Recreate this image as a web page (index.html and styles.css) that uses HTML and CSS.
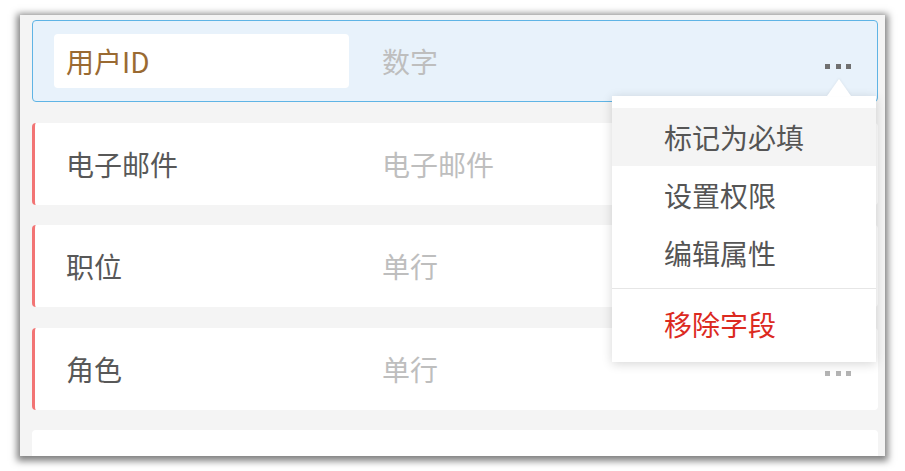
FILE: index.html
```html
<!DOCTYPE html>
<html lang="zh">
<head>
<meta charset="utf-8">
<title>字段列表</title>
<link rel="stylesheet" href="styles.css">
</head>
<body>
<div class="frame">
  <div class="list">
    <div class="field selected">
      <div class="name-input">用户ID</div>
      <div class="type">数字</div>
      <div class="more dark"><i></i><i></i><i></i></div>
    </div>
    <div class="field required">
      <div class="name">电子邮件</div>
      <div class="type">电子邮件</div>
      <div class="more"><i></i><i></i><i></i></div>
    </div>
    <div class="field required">
      <div class="name">职位</div>
      <div class="type">单行</div>
      <div class="more"><i></i><i></i><i></i></div>
    </div>
    <div class="field required">
      <div class="name">角色</div>
      <div class="type">单行</div>
      <div class="more"><i></i><i></i><i></i></div>
    </div>
    <div class="field"></div>
  </div>
  <div class="menu">
    <span class="caret"></span>
    <div class="item hover">标记为必填</div>
    <div class="item">设置权限</div>
    <div class="item">编辑属性</div>
    <div class="divider"></div>
    <div class="item danger">移除字段</div>
  </div>
</div>
</body>
</html>
```
FILE: styles.css
```css
html, body {
  margin: 0;
  background: #fff;
  overflow: hidden;
}
body {
  height: 471px;
  padding-top: 15px;
  box-sizing: border-box;
  font-family: "Noto Sans CJK SC", "Noto Sans", sans-serif;
  font-size: 28px;
}
.frame {
  position: relative;
  margin-left: 20px;
  width: 865px;
  height: 441px;
  overflow: hidden;
  background: #f4f4f4;
  box-shadow: 0 2px 7px 3px rgba(0, 0, 0, 0.5);
}
.list {
  display: flex;
  flex-direction: column;
  gap: 20.5px;
  padding: 5px 7px 0 12px;
}
.field {
  flex-shrink: 0;
  box-sizing: border-box;
  height: 82px;
  display: flex;
  align-items: center;
  background: #fff;
  border-radius: 4px;
  padding: 0 27px 0 22px;
}
.field.selected {
  border: 1px solid #5fb4e5;
  background: #e8f2fb;
  padding-left: 21px;
  padding-right: 26px;
}
.field.required {
  border-left: 3px solid #f27474;
  padding-left: 19px;
}
.name, .name-input {
  box-sizing: border-box;
  width: 295px;
  padding-left: 12px;
  color: #585858;
}
.name-input {
  height: 54px;
  display: flex;
  align-items: center;
  background: #fff;
  border-radius: 4px;
  color: #9a6a32;
}
.type {
  flex: 1;
  margin-left: 33px;
  color: #bebebe;
}
.more {
  display: flex;
  gap: 5.5px;
  margin-top: 10px;
}
.more i {
  display: block;
  width: 5px;
  height: 5px;
  background: #b4b4b4;
}
.more.dark i {
  background: #707070;
}
.menu {
  position: absolute;
  left: 592px;
  top: 81px;
  width: 264px;
  box-sizing: border-box;
  padding: 12px 0 9px;
  background: #fff;
  box-shadow: 0 2px 10px rgba(0, 0, 0, 0.16);
}
.caret {
  position: absolute;
  top: -17px;
  left: 215px;
  width: 0;
  height: 0;
  border-left: 12.5px solid transparent;
  border-right: 12.5px solid transparent;
  border-bottom: 17px solid #fff;
  filter: drop-shadow(0 -1px 1px rgba(0, 0, 0, 0.05));
}
.item {
  height: 58px;
  display: flex;
  align-items: center;
  padding-left: 52px;
  color: #555;
}
.item.hover {
  background: #f4f4f4;
}
.item.danger {
  color: #dc2a1f;
}
.divider {
  height: 1px;
  margin: 6px 0;
  background: #e6e6e6;
}
```
